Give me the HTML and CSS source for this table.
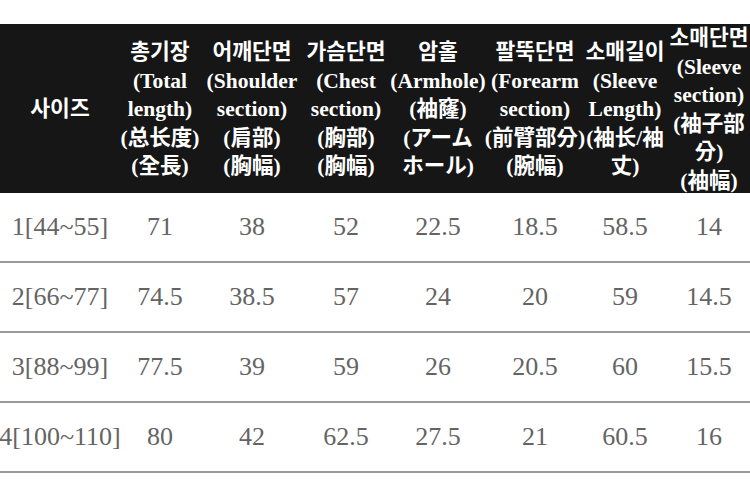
FILE: index.html
```html
<!DOCTYPE html>
<html lang="ko">
<head>
<meta charset="utf-8">
<title>사이즈표</title>
<link rel="stylesheet" href="styles.css">
</head>
<body>
<div class="sheet">
  <div class="head">
    <div class="hc"><span>사이즈</span></div>
    <div class="hc"><span>총기장<br>(Total<br>length)<br>(总长度)<br>(全長)</span></div>
    <div class="hc"><span>어깨단면<br>(Shoulder<br>section)<br>(肩部)<br>(胸幅)</span></div>
    <div class="hc"><span>가슴단면<br>(Chest<br>section)<br>(胸部)<br>(胸幅)</span></div>
    <div class="hc"><span>암홀<br>(Armhole)<br>(袖窿)<br>(アーム<br>ホール)</span></div>
    <div class="hc"><span>팔뚝단면<br>(Forearm<br>section)<br>(前臂部分)<br>(腕幅)</span></div>
    <div class="hc"><span>소매길이<br>(Sleeve<br>Length)<br>(袖长/袖<br>丈)</span></div>
    <div class="hc"><span>소매단면<br>(Sleeve<br>section)<br>(袖子部<br>分)<br>(袖幅)</span></div>
  </div>
  <div class="row">
    <div class="dc">1[44~55]</div><div class="dc">71</div><div class="dc">38</div><div class="dc">52</div><div class="dc">22.5</div><div class="dc">18.5</div><div class="dc">58.5</div><div class="dc">14</div>
  </div>
  <div class="row">
    <div class="dc">2[66~77]</div><div class="dc">74.5</div><div class="dc">38.5</div><div class="dc">57</div><div class="dc">24</div><div class="dc">20</div><div class="dc">59</div><div class="dc">14.5</div>
  </div>
  <div class="row">
    <div class="dc">3[88~99]</div><div class="dc">77.5</div><div class="dc">39</div><div class="dc">59</div><div class="dc">26</div><div class="dc">20.5</div><div class="dc">60</div><div class="dc">15.5</div>
  </div>
  <div class="row">
    <div class="dc">4[100~110]</div><div class="dc">80</div><div class="dc">42</div><div class="dc">62.5</div><div class="dc">27.5</div><div class="dc">21</div><div class="dc">60.5</div><div class="dc">16</div>
  </div>
</div>
</body>
</html>
```
FILE: styles.css
```css
html, body {
  margin: 0;
  padding: 0;
  background: #ffffff;
}
body {
  padding-top: 24px;
  overflow: hidden;
}
.sheet {
  width: 750px;
}
.head, .row {
  display: grid;
  grid-template-columns: 120px 80px 104px 84px 100px 94px 86px 82px;
}
.head {
  height: 169px;
  background: #161616;
  color: #ffffff;
  font-family: "Liberation Serif", "Noto Sans CJK KR", serif;
  font-weight: bold;
  font-size: 21.5px;
  line-height: 28.5px;
}
.hc {
  display: flex;
  align-items: center;
  justify-content: center;
  text-align: center;
  white-space: nowrap;
  padding-bottom: 5px;
}
.row {
  height: 68px;
  border-bottom: 2px solid #9a9a9a;
  font-family: "Liberation Serif", serif;
  font-size: 26px;
  color: #646464;
}
.dc {
  display: flex;
  align-items: center;
  justify-content: center;
  white-space: nowrap;
}
```
